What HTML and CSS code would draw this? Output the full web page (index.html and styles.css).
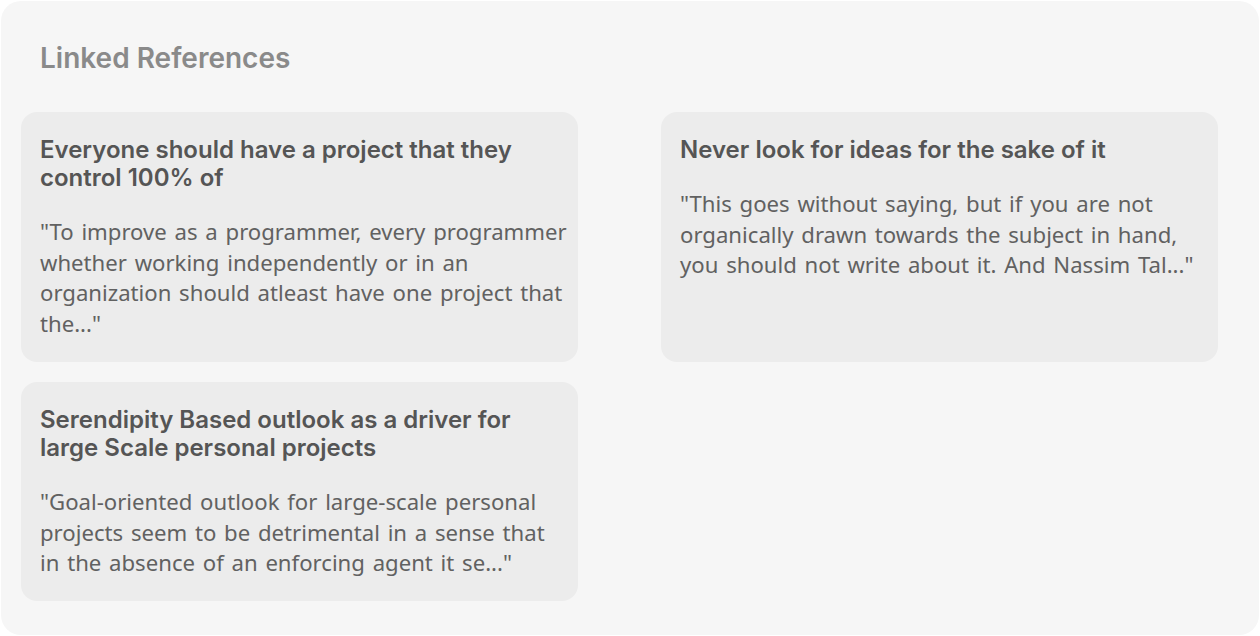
FILE: index.html
```html
<!doctype html>
<html lang="en">
<head>
  <meta charset="utf-8" />
  <meta name="viewport" content="width=device-width,initial-scale=1" />
  <title>Linked References</title>
  <link rel="stylesheet" href="styles.css">
</head>
<body>
  <section class="panel">
    <h2 class="panel-title">Linked References</h2>
    <div class="refs">
      <article class="ref">
        <h3 class="ref-title">Everyone should have a project that they control 100% of</h3>
        <p class="ref-excerpt">"To improve as a programmer, every programmer whether working independently or in an organization should atleast have one project that the..."</p>
      </article>
      <article class="ref">
        <h3 class="ref-title">Never look for ideas for the sake of it</h3>
        <p class="ref-excerpt">"This goes without saying, but if you are not organically drawn towards the subject in hand, you should not write about it. And Nassim Tal..."</p>
      </article>
      <article class="ref">
        <h3 class="ref-title">Serendipity Based outlook as a driver for large Scale personal projects</h3>
        <p class="ref-excerpt">"Goal-oriented outlook for large-scale personal projects seem to be detrimental in a sense that in the absence of an enforcing agent it se..."</p>
      </article>
    </div>
  </section>
</body>
</html>
```

FILE: styles.css
```css
:root { --panel:#f6f6f6; --card:#ececec; --muted:#8a8a8a; --ink:#555; --text:#616161; }
html, body {
  margin:0; background:#fff;
  font-family:"Noto Sans", "Open Sans", sans-serif;
}
.panel {
  margin:1px; height:634px; box-sizing:border-box;
  background:var(--panel); border-radius:20px;
  padding:40px 20px 20px;
}
.panel-title {
  margin:0 0 37px 19px;
  font-family:Inter, "Noto Sans", sans-serif;
  font-size:28px; line-height:34px; font-weight:600;
  color:var(--muted);
}
.refs {
  display:grid; grid-template-columns:557px 557px;
  column-gap:83px; row-gap:20px;
}
.ref {
  background:var(--card); border-radius:16px;
  padding:24px 10px 23px 19px;
}
.ref-title {
  margin:0 0 24px; padding-right:8px;
  font-family:Inter, "Noto Sans", sans-serif;
  font-size:24px; line-height:28px; font-weight:600;
  color:var(--ink);
}
.ref-excerpt {
  margin:0;
  font-size:22.15px; line-height:30.7px; font-weight:400;
  word-spacing:2px;
  color:var(--text);
}
```
